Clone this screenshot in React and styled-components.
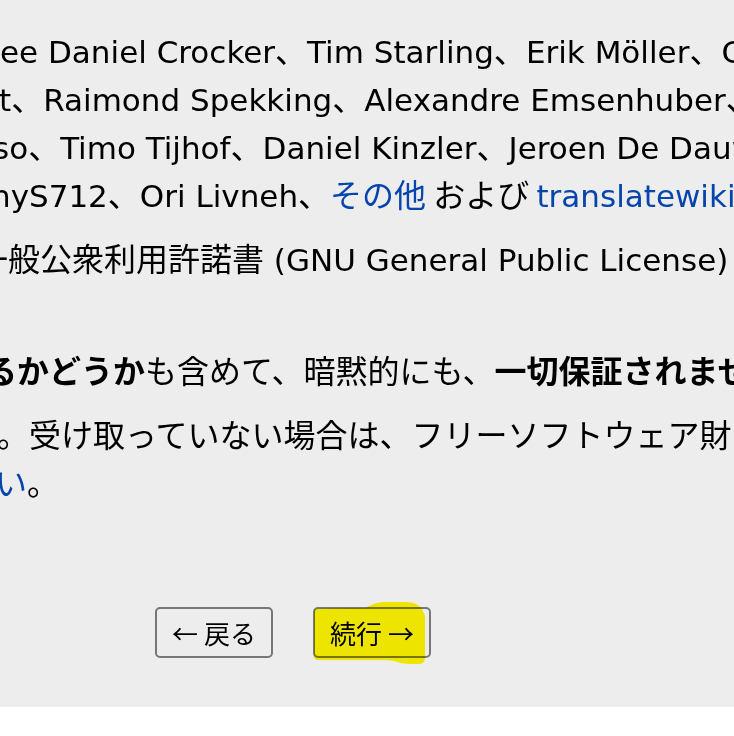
import { Fragment } from "react";
import styled, { createGlobalStyle } from "styled-components";

const GlobalStyle = createGlobalStyle`
	html, body {
		margin: 0;
		padding: 0;
		background: #ffffff;
	}
`;

// the grey installer page, cropped on both sides
const Page = styled.div`
	background: #ededed;
	color: #000;
	font-family: "Noto Sans CJK JP", "Noto Sans", sans-serif;
	font-size: 32px;
	overflow: hidden;
	padding: 25px 0 49px;
`;

const Copy = styled.section`
	display: flex;
	flex-direction: column;
	gap: 16px;
`;

const Para = styled.div``;

// one wrapped line of the wide page; lead pulls the clipped first glyph left
const Line = styled.div`
	white-space: nowrap;
	height: 48px;
	line-height: 48px;
	margin-left: ${(p) => p.$lead || 0}px;
`;

const Roman = styled.span`
	font-family: "DejaVu Sans", "Noto Sans CJK JP", sans-serif;
	font-size: 31px;
`;

const Link = styled.a`
	color: #0645ad;
	text-decoration: none;
`;

const Strong = styled.strong`
	font-weight: 700;
`;

const Actions = styled.div`
	display: flex;
	gap: 40px;
	padding-left: 155px;
	margin-top: 102px;
`;

const Button = styled.button`
	position: relative;
	box-sizing: border-box;
	width: 118px;
	height: 51px;
	padding: 0;
	border: 2px solid #777;
	border-radius: 5px;
	background: transparent;
	color: #000;
	font-family: "Noto Sans CJK JP", sans-serif;
	font-size: 26px;
	line-height: 1;
	white-space: nowrap;
	display: flex;
	align-items: center;
	justify-content: center;
`;

// marker stroke laid over the continue button
const Marker = styled.svg`
	position: absolute;
	left: -3px;
	top: -9px;
	width: 114px;
	height: 66px;
	mix-blend-mode: multiply;
	pointer-events: none;
`;

function Names({ items }) {
	return items.map((n, i) => (
		<Fragment key={n}>
			{i > 0 && "、"}
			<Roman>{n}</Roman>
		</Fragment>
	));
}

export default function App() {
	return (
		<>
			<GlobalStyle />
			<Page>
				<Copy>
					<Para>
						<Line>
							<Names items={["ee Daniel Crocker", "Tim Starling", "Erik Möller", "Gabriel Wicke"]} />
						</Line>
						<Line $lead={-1}>
							<Names items={["t", "Raimond Spekking", "Alexandre Emsenhuber", "Siebrand Mazeland"]} />
						</Line>
						<Line $lead={-7}>
							<Names items={["so", "Timo Tijhof", "Daniel Kinzler", "Jeroen De Dauw", "Brad Jorsch"]} />
						</Line>
						<Line $lead={-9}>
							<Names items={["nyS712", "Ori Livneh"]} />、<Link>その他</Link> および{" "}
							<Link>
								<Roman>translatewiki.net</Roman>
							</Link>{" "}
							の翻訳者の皆さん
						</Line>
					</Para>
					<Para>
						<Line $lead={-24}>
							一般公衆利用許諾書<Roman> (GNU General Public License) (</Roman>バージョン 2、またはそれ以降
						</Line>
						<Line>&nbsp;</Line>
					</Para>
					<Para>
						<Line $lead={-15}>
							<Strong>るかどうか</Strong>も含めて、暗黙的にも、<Strong>一切保証されません</Strong>。詳しくは
						</Line>
					</Para>
					<Para>
						<Line $lead={-3}>。受け取っていない場合は、フリーソフトウェア財団 (the Free Software Foundation)</Line>
						<Line $lead={-5}>
							<Link>い</Link>。
						</Line>
					</Para>
				</Copy>
				<Actions>
					<Button>← 戻る</Button>
					<Button>
						続行 →
						<Marker viewBox="0 0 114 66">
							<path
								d="M3 9 C20 8 40 8 54 8 C60 4 66 2 74 2 L94 2 C104 2 110 6 113 16 L113 56 C113 61 112 64 106 64 C98 64 90 64 82 61 C78 60 72 60 66 60 L6 60 C3 60 2 58 2 55 L2 12 C2 10 2 9 3 9 Z"
								fill="#fff700"
							/>
						</Marker>
					</Button>
				</Actions>
			</Page>
		</>
	);
}
